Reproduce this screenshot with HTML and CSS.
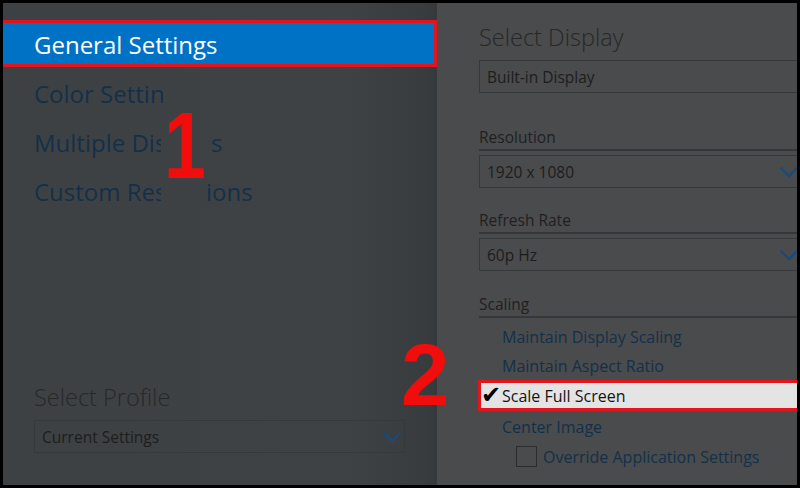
FILE: index.html
```html
<!DOCTYPE html>
<html>
<head>
<meta charset="utf-8">
<link rel="stylesheet" href="styles.css">
</head>
<body>
<div class="frame">
  <aside class="left">
    <nav class="menu">
      <div class="menu-item active">General Settings</div>
      <div class="menu-item"><span class="clip c1">Color Settings</span></div>
      <div class="menu-item"><span class="clip c2">Multiple Displays</span><span class="tail t2">s</span></div>
      <div class="menu-item"><span class="clip c3">Custom Resolutions</span><span class="tail t3">ions</span></div>
    </nav>
    <div class="profile">
      <div class="heading">Select Profile</div>
      <div class="select profile-select">
        <span>Current Settings</span>
        <svg class="chev" viewBox="0 0 20 12" width="20" height="12"><path d="M1.5 1.5 L10 10 L18.5 1.5" fill="none" stroke="#1b4a78" stroke-width="2.4"/></svg>
      </div>
    </div>
  </aside>
  <main class="right">
    <div class="heading">Select Display</div>
    <div class="select"><span>Built-in Display</span></div>

    <div class="label first">Resolution</div>
    <div class="select"><span>1920 x 1080</span>
      <svg class="chev" viewBox="0 0 20 12" width="20" height="12"><path d="M1.5 1.5 L10 10 L18.5 1.5" fill="none" stroke="#1b4a78" stroke-width="2.4"/></svg>
    </div>

    <div class="label refresh">Refresh Rate</div>
    <div class="select"><span>60p Hz</span>
      <svg class="chev" viewBox="0 0 20 12" width="20" height="12"><path d="M1.5 1.5 L10 10 L18.5 1.5" fill="none" stroke="#1b4a78" stroke-width="2.4"/></svg>
    </div>

    <div class="label scaling">Scaling</div>
    <ul class="options">
      <li class="opt">Maintain Display Scaling</li>
      <li class="opt">Maintain Aspect Ratio</li>
      <li class="opt selected"><span class="check">✔</span>Scale Full Screen</li>
      <li class="opt center">Center Image</li>
      <li class="opt sub"><span class="box"></span>Override Application Settings</li>
    </ul>
  </main>

  <div class="marker m1">1</div>
  <div class="marker m2">2</div>
</div>
</body>
</html>
```
FILE: styles.css
```css
* { box-sizing: border-box; }
html, body { margin: 0; padding: 0; }
body {
  background: #000;
  width: 800px;
  height: 488px;
  overflow: hidden;
  font-family: "Open Sans", "Noto Sans", sans-serif;
}
.frame {
  position: relative;
  width: 800px;
  height: 488px;
  padding: 3px;
  display: flex;
}
.left {
  width: 434px;
  flex: none;
  background: linear-gradient(to right, #3e4143 0%, #3f4244 80%, #393c3e 97%, #36393b 100%);
  display: flex;
  flex-direction: column;
  justify-content: space-between;
  padding-top: 17px;
}
.menu { display: flex; flex-direction: column; }
.menu-item {
  height: 49px;
  display: flex;
  align-items: center;
  padding-left: 31px;
  font-size: 24px;
  color: #143049;
  white-space: nowrap;
}
.menu-item.active {
  height: 47px;
  margin-bottom: 2px;
  background: #0072c6;
  color: #fff;
  border: 3px solid #e3151c;
  border-left: none;
  padding-top: 1px;
}
.clip {
  display: block;
  overflow: hidden;
  white-space: nowrap;
  flex: none;
}
.c1 { width: 130px; }
.c2 { width: 127px; }
.c3 { width: 127px; }
.tail { display: block; flex: none; }
.t2 { margin-left: 50px; }
.t3 { margin-left: 45px; }

.profile { padding: 0 32px 32px 31px; }
.heading {
  font-size: 23.5px;
  font-weight: 300;
  color: #262829;
  line-height: 30px;
}
.select {
  height: 33px;
  border: 1px solid #36393a;
  display: flex;
  align-items: center;
  justify-content: space-between;
  padding: 0 2px 0 7px;
  font-size: 15.5px;
  color: #1c1d1e;
}
.profile .heading { margin-bottom: 8px; }
.profile-select { width: 371px; }
.chev { display: block; }

.right {
  flex: 1;
  background: #4a4b4c;
  padding: 19px 0 0 42px;
  overflow: hidden;
  display: flex;
  flex-direction: column;
}
.right .heading { margin-bottom: 8px; }
.right .select { width: 323px; flex: none; }
.label {
  font-size: 15.5px;
  color: #1f2021;
  line-height: 20px;
  padding-bottom: 2px;
  border-bottom: 2px solid #35373a;
  width: 330px;
  margin-bottom: 4px;
  flex: none;
}
.label.first { margin-top: 34px; }
.label.refresh { margin-top: 22px; }
.label.scaling { margin-top: 23px; }
.options {
  list-style: none;
  margin: 0;
  padding: 0;
}
.opt {
  height: 29px;
  display: flex;
  align-items: center;
  padding-left: 23px;
  font-size: 16px;
  color: #143049;
  white-space: nowrap;
}
.opt.selected {
  height: 31px;
  margin-left: -1px;
  width: 340px;
  background: #e4e4e4;
  border: 3px solid #e3151c;
  padding-left: 1px;
  color: #151515;
}
.opt.center { height: 31px; }
.check {
  width: 21px;
  font-size: 24px;
  line-height: 1;
  color: #000;
  font-family: "DejaVu Sans", sans-serif;
  margin-top: -2px;
  margin-left: -1px;
}
.opt.sub { padding-left: 37px; }
.box {
  width: 21px;
  height: 21px;
  border: 1px solid #2b2c2d;
  margin-right: 6px;
  flex: none;
}

.marker {
  position: absolute;
  font-family: "Liberation Sans", Arial, sans-serif;
  font-weight: 700;
  color: #f20d0d;
  line-height: 1;
  transform-origin: left top;
}
.m1 { left: 164px; top: 99px; font-size: 94px; transform: scaleX(0.8); }
.m2 { left: 401px; top: 331px; font-size: 87px; }
```
